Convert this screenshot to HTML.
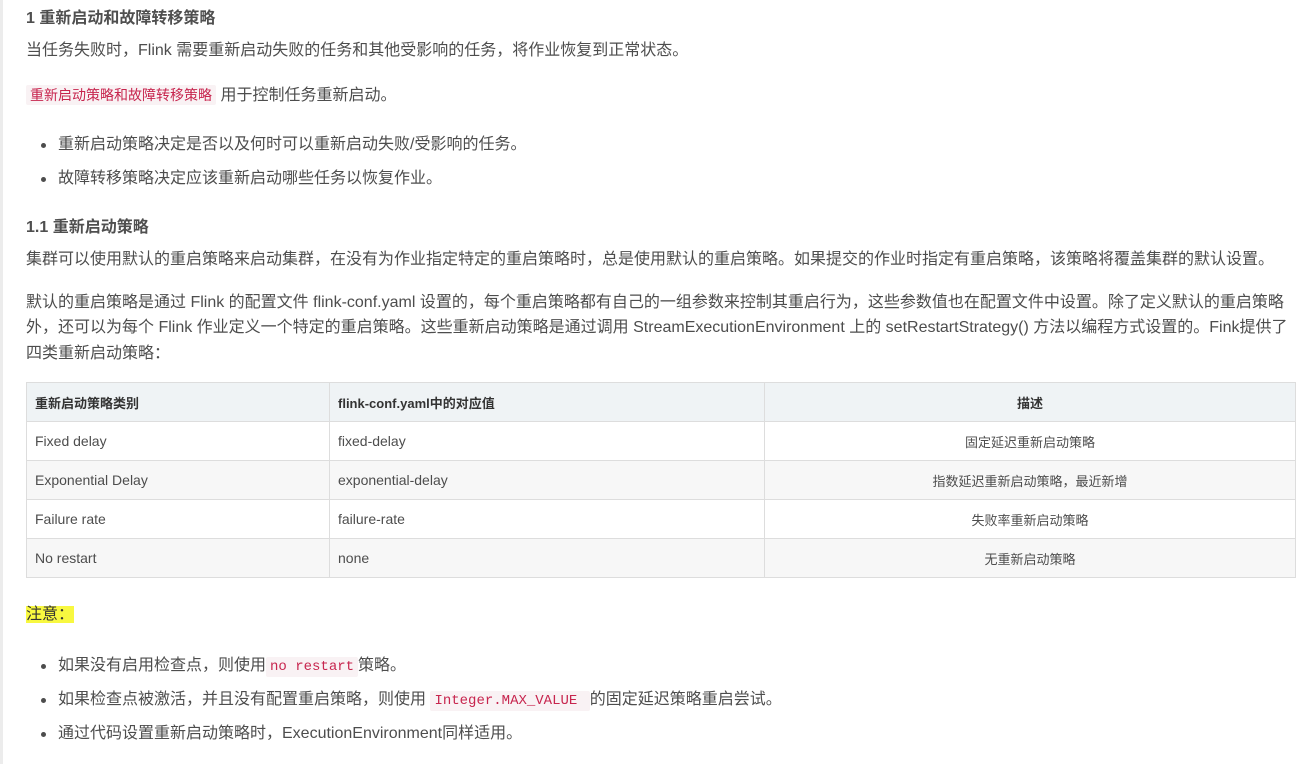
<!DOCTYPE html>
<html><head><meta charset="utf-8"><style>
*{margin:0;padding:0;box-sizing:border-box}
body{width:1314px;height:764px;background:#fff;position:relative;overflow:hidden;font-family:"Liberation Sans","Noto Sans CJK SC",sans-serif;color:#4d4d4d;font-size:16px}
.bar{position:absolute;left:0;top:0;width:3px;height:764px;background:#ececec}
.l{position:absolute;left:26px;white-space:nowrap;line-height:20px}
h3{position:absolute;left:26px;font-size:16px;font-weight:bold;color:#4f4f4f;line-height:20px;white-space:nowrap}
.code{color:#c7254e;background:#f9f2f4;font-size:14px;padding:2px 4px;border-radius:2px}
.mono{font-family:"Liberation Mono",monospace}
.b{left:58px}
.b::before{content:"";position:absolute;left:-17px;top:8px;width:5px;height:5px;border-radius:50%;background:#4d4d4d}
table{position:absolute;left:26px;top:382px;width:1270px;border-collapse:collapse;font-size:14px}
td,th{border:1px solid #ddd;height:39px;padding:0 8px;text-align:left;font-weight:normal}
th{background:#eff3f5;font-weight:bold;color:#333;font-size:13px}
tr:nth-child(odd) td{background:#f7f7f7}
.c{text-align:center;font-size:13px}
.hl{background:#f8f840;color:#333}
</style></head><body>
<div class="bar"></div>
<h3 style="top:9px">1 重新启动和故障转移策略</h3>
<div class="l" style="top:41px">当任务失败时，Flink 需要重新启动失败的任务和其他受影响的任务，将作业恢复到正常状态。</div>
<div class="l" style="top:85px"><span class="code">重新启动策略和故障转移策略</span> 用于控制任务重新启动。</div>
<div class="l b" style="top:135px">重新启动策略决定是否以及何时可以重新启动失败/受影响的任务。</div>
<div class="l b" style="top:169px">故障转移策略决定应该重新启动哪些任务以恢复作业。</div>
<h3 style="top:218px">1.1 重新启动策略</h3>
<div class="l" style="top:250px">集群可以使用默认的重启策略来启动集群，在没有为作业指定特定的重启策略时，总是使用默认的重启策略。如果提交的作业时指定有重启策略，该策略将覆盖集群的默认设置。</div>
<div class="l" style="top:293px">默认的重启策略是通过 Flink 的配置文件 flink-conf.yaml 设置的，每个重启策略都有自己的一组参数来控制其重启行为，这些参数值也在配置文件中设置。除了定义默认的重启策略</div>
<div class="l" style="top:318px">外，还可以为每个 Flink 作业定义一个特定的重启策略。这些重新启动策略是通过调用 StreamExecutionEnvironment 上的 setRestartStrategy() 方法以编程方式设置的。Fink提供了</div>
<div class="l" style="top:344px">四类重新启动策略：</div>
<table>
<tr><th style="width:303px">重新启动策略类别</th><th style="width:435px">flink-conf.yaml中的对应值</th><th style="text-align:center">描述</th></tr>
<tr><td>Fixed delay</td><td>fixed-delay</td><td class="c">固定延迟重新启动策略</td></tr>
<tr><td>Exponential Delay</td><td>exponential-delay</td><td class="c">指数延迟重新启动策略，最近新增</td></tr>
<tr><td>Failure rate</td><td>failure-rate</td><td class="c">失败率重新启动策略</td></tr>
<tr><td>No restart</td><td>none</td><td class="c">无重新启动策略</td></tr>
</table>
<div class="l" style="top:605px"><span class="hl">注意：</span></div>
<div class="l b" style="top:656px">如果没有启用检查点，则使用<span class="code mono">no restart</span>策略。</div>
<div class="l b" style="top:690px">如果检查点被激活，并且没有配置重启策略，则使用 <span class="code mono">Integer.MAX_VALUE </span> 的固定延迟策略重启尝试。</div>
<div class="l b" style="top:724px">通过代码设置重新启动策略时，ExecutionEnvironment同样适用。</div>
</body></html>
